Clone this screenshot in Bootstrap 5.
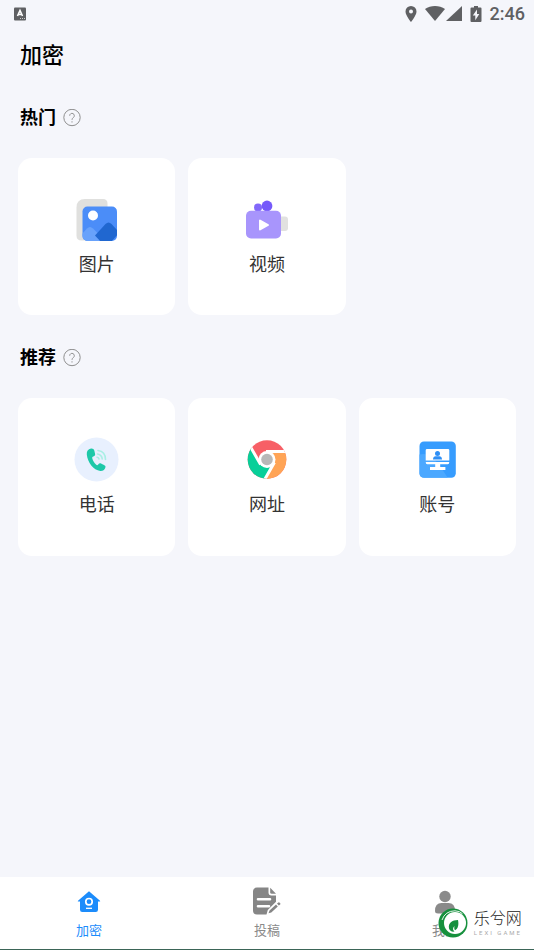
<!DOCTYPE html>
<html lang="zh-CN">
<head>
<meta charset="utf-8">
<meta name="viewport" content="width=device-width, initial-scale=1">
<title>加密</title>
<link href="https://cdn.jsdelivr.net/npm/bootstrap@5.3.0/dist/css/bootstrap.min.css" rel="stylesheet">
<style>
  body { background: #f5f6fb; color: #000; font-family: Roboto, "Noto Sans CJK SC", sans-serif; }
  svg { display: block; flex: none; }
  .status-bar { height: 28px; padding: 0 9px 0 13px; color: #5f6063; }
  .status-time { font-size: 18px; line-height: 28px; font-weight: 500; }
  .page-body { padding: 12px 18px 28px; }
  .page-title { font-size: 22px; line-height: 32px; font-weight: 500; padding-left: 2px; margin: 0 0 31px; }
  .section-head { padding-left: 2px; margin-bottom: 25px; gap: 7px; }
  .section-head h2 { font-size: 18px; line-height: 30px; font-weight: 700; margin: 0; }
  .section-block + .section-block { margin-top: 28px; }
  .tile-grid { grid-template-columns: repeat(3, 1fr); gap: 13px; }
  .tile { aspect-ratio: 1; border-radius: 14px; gap: 8px; font-size: 18px; line-height: 24px; color: #333; }
  .tab-bar { height: 73px; border-bottom: 1px solid #3b6557; }
  .tab-item { padding-top: 10px; gap: 4px; font-size: 13px; line-height: 20px; color: #8a8a8a; }
  .tab-item.active { color: #1c8cfb; }
  .site-stamp { right: 12px; bottom: 12px; gap: 6px; pointer-events: none; color: #222; }
  .stamp-name { font-size: 16px; line-height: 20px; font-weight: 300; }
  .stamp-sub { font-size: 6px; line-height: 8px; color: #aaa; letter-spacing: 2px; }
</style>
</head>
<body class="d-flex flex-column min-vh-100">

<header class="status-bar d-flex align-items-center justify-content-between">
  <svg width="14" height="14" viewBox="0 0 14 14" aria-hidden="true"><rect x="1" y="0.500" width="12" height="13" rx="1" fill="#5f6063"/><path d="M4.500 9 7 3.500 9.500 9M5.300 7.500h3.400" fill="none" stroke="#fff" stroke-width="1.600"/><path d="M7 11.500h5" stroke="#ccc" stroke-dasharray="1 1"/></svg>
  <div class="d-flex align-items-center">
    <svg class="me-2" width="12" height="16" viewBox="0 0 12 16" fill="currentColor" aria-hidden="true"><path fill-rule="evenodd" d="M6 0a5.500 5.500 0 0 1 5.500 5.500C11.500 9.600 6 16 6 16S.5 9.600.5 5.500A5.500 5.500 0 0 1 6 0Zm0 3.500a2 2 0 1 0 0 4 2 2 0 0 0 0-4Z"/></svg>
    <svg width="20" height="16" viewBox="0 0 20 16" fill="currentColor" aria-hidden="true"><path d="M0 3C5.500-1 14.500-1 20 3L10 15Z"/></svg>
    <svg class="me-2" width="17" height="16" viewBox="0 0 17 16" fill="currentColor" aria-hidden="true"><path d="M17 0v15H1Z"/></svg>
    <svg class="me-2" width="12" height="16" viewBox="0 0 12 16" aria-hidden="true"><path d="M4 0h4v1.500h2.500q1 0 1 1V15q0 1-1 1h-9q-1 0-1-1V2.500q0-1 1-1H4Z" fill="currentColor"/><path d="M7 3.500 2.800 9.600h2.500v4.600l4-6.200H7Z" fill="#f5f6fb"/></svg>
    <span class="status-time">2:46</span>
  </div>
</header>

<main class="page-body flex-grow-1">
  <h1 class="page-title">加密</h1>

  <section class="section-block">
    <div class="section-head d-flex align-items-center">
      <h2>热门</h2>
      <button type="button" class="btn border-0 p-0" aria-label="热门说明"><svg width="18" height="18" viewBox="0 0 18 18" fill="none" stroke="#8e8e8e" aria-hidden="true"><circle cx="9" cy="8.500" r="8.200"/><path d="M6.700 6.700a2.300 2.300 0 1 1 3.800 1.700Q9 9.500 9 10.800"/><path d="M9 12.300v1.200"/></svg></button>
    </div>
    <div class="tile-grid d-grid">
      <button type="button" class="tile btn bg-white border-0 p-0 d-flex flex-column align-items-center justify-content-center">
        <svg width="48" height="48" viewBox="0 0 48 48" aria-hidden="true">
          <clipPath id="photo"><rect x="9.500" y="9.500" width="34.500" height="34.500" rx="5"/></clipPath>
          <path d="M12 2h18q4.500 0 4.500 4.500v37H8.500q-5 0-5-5V10.500q0-8.500 8.500-8.500Z" fill="#e0e0de"/>
          <g clip-path="url(#photo)"><path d="M9 9h36v36H9z" fill="#4b8df8"/><path d="M8 38 14 31.500q3-3 6 0l13 13H8Z" fill="#68a2fb"/><path d="M22 38.500 32.500 27q3-3 6 0l6.500 7v3l-7 8H28Z" fill="#2067d0"/></g>
          <circle cx="20" cy="18.500" r="5" fill="#fff"/>
        </svg>图片
      </button>
      <button type="button" class="tile btn bg-white border-0 p-0 d-flex flex-column align-items-center justify-content-center">
        <svg width="48" height="48" viewBox="0 0 48 48" aria-hidden="true">
          <rect x="34" y="19.500" width="11" height="14.500" rx="3" fill="#e1e1e0"/><circle cx="15" cy="10.500" r="4" fill="#8268fa"/><circle cx="24" cy="9" r="5.400" fill="#7559fa"/>
          <rect x="3" y="13.800" width="35" height="27.700" rx="5" fill="#a895fc"/><path d="M17 23.500v9l8-4.500Z" fill="#fff" stroke="#fff" stroke-width="2" stroke-linejoin="round"/>
        </svg>视频
      </button>
    </div>
  </section>

  <section class="section-block">
    <div class="section-head d-flex align-items-center">
      <h2>推荐</h2>
      <button type="button" class="btn border-0 p-0" aria-label="推荐说明"><svg width="18" height="18" viewBox="0 0 18 18" fill="none" stroke="#8e8e8e" aria-hidden="true"><circle cx="9" cy="8.500" r="8.200"/><path d="M6.700 6.700a2.300 2.300 0 1 1 3.800 1.700Q9 9.500 9 10.800"/><path d="M9 12.300v1.200"/></svg></button>
    </div>
    <div class="tile-grid d-grid">
      <button type="button" class="tile btn bg-white border-0 p-0 d-flex flex-column align-items-center justify-content-center">
        <svg width="48" height="48" viewBox="0 0 48 48" aria-hidden="true">
          <circle cx="23.500" cy="22.500" r="22" fill="#e8f0fe"/>
          <path d="M18 11.500c-3 .5-4.500 3-4.200 6 .8 8 6.700 15.500 13.500 16.500 2.500.2 5-1.500 5.200-4 .1-1-.6-1.500-1.500-2l-3-1.600c-1.200-.5-2 0-2.800 1.200-.7.800-1.400.7-2.200 0-1.700-1.700-3-3.700-3.700-6-.3-1 0-1.600 1-2 1.500-.5 2-1.200 1.800-2.500l-.8-3.600c-.4-1.400-1.500-2.200-3.300-2Z" fill="#1dc8a8"/>
          <g fill="none" stroke="#a9efe4" stroke-width="1.600" stroke-linecap="round"><path d="M25 13.500q7.500 1 7.500 9"/><path d="M24.500 17q4.500.8 4.700 5"/><path d="M24 20.200q1.700.2 2 1.800"/></g>
        </svg>电话
      </button>
      <button type="button" class="tile btn bg-white border-0 p-0 d-flex flex-column align-items-center justify-content-center">
        <svg width="48" height="48" viewBox="0 0 48 48" aria-hidden="true">
          <clipPath id="disc"><circle r="19.300"/></clipPath>
          <g transform="translate(24 22.500)"><g clip-path="url(#disc)"><path d="M-20-20h40v40h-40z" fill="#f75f66"/><path d="M0-8h30v38H-8L6.900 4Z" fill="#ffa456"/><path d="M6.900 4-8.100 30H-30v-66L-6.900 4Z" fill="#08cf99"/><path d="M-1-8h31M7.400 3.100-8.100 30M-6.400 4.900-26.900-30.600" stroke="#fff" stroke-width="3"/></g><circle r="8.500" fill="#fff"/><circle r="5.800" fill="#b8b8b8"/></g>
        </svg>网址
      </button>
      <button type="button" class="tile btn bg-white border-0 p-0 d-flex flex-column align-items-center justify-content-center">
        <svg width="48" height="48" viewBox="0 0 48 48" aria-hidden="true">
          <rect x="6.500" y="4.500" width="36.300" height="36.300" rx="4.500" fill="#369cfe"/><path d="M6.500 17.500q8-2 14 4t14 19H11q-4.500 0-4.500-4.500Z" fill="#4ba8ff"/>
          <path d="M14 12h21q1.300 0 1.300 1.300V23.500H12.700V13.300q0-1.300 1.300-1.300ZM12.700 24.900h23.600q0 2.400-1.600 2.400h-7.500v2.800h5.200v2.800H17v-2.800h5.200v-2.800h-7.900q-1.600 0-1.600-2.400Z" fill="#fff"/>
          <circle cx="24.500" cy="16.500" r="2.500" fill="#2f8ff5"/><path d="M20 22.500q.2-3.200 2.700-3.200h3.600q2.500 0 2.700 3.200Z" fill="#2f8ff5"/>
        </svg>账号
      </button>
    </div>
  </section>
</main>

<footer class="position-relative">
  <nav class="tab-bar bg-white d-flex" aria-label="主导航">
    <a href="#encrypt" class="tab-item active col-4 text-decoration-none d-flex flex-column align-items-center" aria-current="page">
      <svg width="30" height="30" viewBox="0 0 30 30" aria-hidden="true"><path d="M15 4.200 26 13.700q.6.800-.4.900H24v8.200q0 2.200-2.200 2.200H8.200Q6 25 6 22.800v-8.200H4.400q-1-.1-.4-.9Z" fill="#1c8cfb"/><circle cx="15" cy="14.700" r="3.200" fill="none" stroke="#fff" stroke-width="1.700"/><path d="M12 21.300h6" stroke="#fff" stroke-width="1.300"/></svg>加密
    </a>
    <a href="#submit" class="tab-item col-4 text-decoration-none d-flex flex-column align-items-center">
      <svg width="30" height="30" viewBox="0 0 30 30" aria-hidden="true"><path d="M5 .6h11.500v4.800q0 3 3 3H24v6.400L15.800 23l-1.300 4.500H5q-4 0-4-4V4.600q0-4 4-4Z" fill="#868686"/><path d="M18.200.8 24 6.700h-4.300q-1.500 0-1.500-1.500Z" fill="#868686"/><path d="M6 12.300h12M6 19.300h11" stroke="#fff" stroke-width="2.600" stroke-linecap="round"/><path d="m17.500 23.500 6.500-6 1.800 2-6.500 6-2.800.8ZM25 16.600l1.400-1.200q.6-.4 1 .1l.8.8q.5.6 0 1.100l-1.400 1.200Z" fill="#868686"/></svg>投稿
    </a>
    <a href="#mine" class="tab-item col-4 text-decoration-none d-flex flex-column align-items-center">
      <svg width="30" height="30" viewBox="0 0 30 30" fill="#8a8a8a" aria-hidden="true"><circle cx="15" cy="9.500" r="5.700"/><path d="M5 24q0-8 6.500-8h7q6.500 0 6.500 8 0 2.500-3 2.500H8q-3 0-3-2.500Z"/></svg>我的
    </a>
  </nav>
  <div class="site-stamp position-absolute d-flex align-items-center">
    <svg width="30" height="30" viewBox="0 0 30 30" aria-hidden="true"><circle cx="15" cy="15" r="14.500" fill="#16903d"/><circle cx="17" cy="15" r="11" fill="#fff"/><path d="M4 12Q7 3 17 2.800q5 .2 7.500 3" fill="none" stroke="#fff" stroke-width=".9"/><path d="M20 12C14 12 10 15 11 20.500c.6 2.500 3 3.500 5.500 3-2-1.500-2-3.500 0-5.500-.5 2-.3 3.500.6 4.200C20 21 21 16.500 20 12Z" fill="#16903d"/></svg>
    <div>
      <div class="stamp-name">乐兮网</div>
      <div class="stamp-sub">LEXI GAME</div>
    </div>
  </div>
</footer>

<script src="https://cdn.jsdelivr.net/npm/bootstrap@5.3.0/dist/js/bootstrap.bundle.min.js"></script>
</body>
</html>
